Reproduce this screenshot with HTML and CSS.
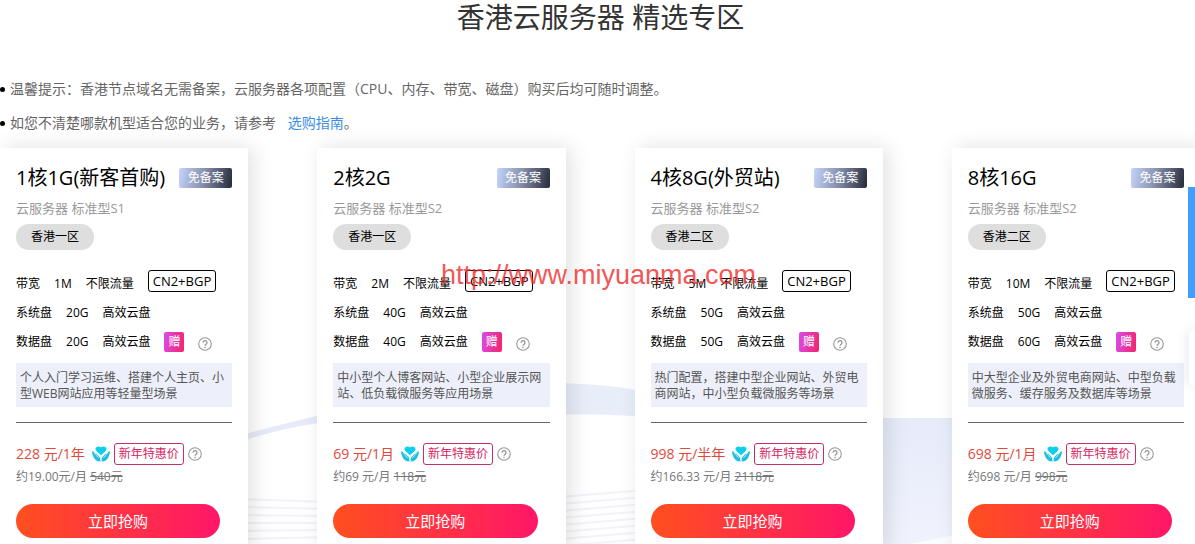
FILE: index.html
```html
<!DOCTYPE html>
<html lang="zh-CN">
<head>
<meta charset="utf-8">
<title>香港云服务器 精选专区</title>
<link rel="stylesheet" href="styles.css">
</head>
<body>
<svg width="0" height="0" class="defs" aria-hidden="true">
  <symbol id="help" viewBox="0 0 14 14">
    <circle cx="7" cy="7" r="6.3" fill="none" stroke="#999" stroke-width="1.1"/>
    <path d="M5 5.700a2 2 0 1 1 3.100 1.600C7.300 7.800 7 8 7 8.700" fill="none" stroke="#888" stroke-width="1.1"/>
    <circle cx="7" cy="10.4" r=".75" fill="#888"/>
  </symbol>
  <symbol id="care" viewBox="0 0 18 16">
    <path d="M9 9.300 4.400 4.900A2.500 2.500 0 0 1 4.800 1.100C6.200 0 8 .3 9 1.500c1-1.200 2.800-1.500 4.200-.4a2.500 2.500 0 0 1 .4 3.800z" fill="#08cfec"/>
    <path d="M0 5.500c1.300-.3 2.100.4 2.500 1.600l.5 1.300.8-.9 3.300 2.900c1 1 1.300 2.200 1.300 5.100C5 15.500 3.200 14 1.900 11.800.8 9.900.2 7.900 0 5.500z" fill="#1bbfe0"/>
    <path d="M18 5.500c-1.300-.3-2.100.4-2.500 1.600L15 8.400l-.8-.9-3.300 2.900c-1 1-1.300 2.200-1.300 5.100 3.400 0 5.200-1.500 6.500-3.700 1.100-1.900 1.700-3.900 1.900-6.300z" fill="#1bbfe0"/>
    <path d="m3.500 8.800 3.200 3M14.500 8.800l-3.200 3" stroke="#fff" stroke-width=".7"/>
  </symbol>
</svg>

<main class="zone">
  <svg class="backdrop" viewBox="0 0 1195 544" preserveAspectRatio="none" aria-hidden="true">
    <defs>
      <linearGradient id="fade" x1="0" y1="0" x2="0" y2="1">
        <stop offset="0" stop-color="#e6ebfa"/><stop offset="1" stop-color="#f0f3fd"/>
      </linearGradient>
    </defs>
    <path d="M240 436C270 426 300 421 330 412V422C300 424 270 433 240 441z" fill="#e6ebfa"/>
    <path d="M560 383C590 384 620 386 645 392V417C620 415 590 414 560 415z" fill="#e8edfa"/>
    <path d="M870 418H1195V544H870z" fill="url(#fade)"/>
    <path d="M870 552 1000 526V552z" fill="#fbfcff"/>
    <path d="M1180 380 1195 386V440H1180z" fill="#eef2fc"/>
    <g fill="none" stroke="#f1f3f9" stroke-width="2">
      <path d="M240 499 330 502M240 507 330 509M240 515 330 516M240 523 330 523M240 531 330 530M240 539 330 537"/>
      <path d="M560 497 645 490M560 504 645 497M560 511 645 504M560 518 645 511M560 525 645 518M560 532 645 525M560 539 645 532M560 546 645 539"/>
    </g>
  </svg>

  <h1 class="zone-title">香港云服务器 精选专区</h1>
  <ul class="tips">
    <li>温馨提示：香港节点域名无需备案，云服务器各项配置（CPU、内存、带宽、磁盘）购买后均可随时调整。</li>
    <li>如您不清楚哪款机型适合您的业务，请参考 <a href="#guide">选购指南</a>。</li>
  </ul>

  <div class="cards">
    <article class="card">
      <header class="card-head"><h2>1核1G(新客首购)</h2><span class="free">免备案</span></header>
      <p class="model">云服务器 标准型S1</p>
      <span class="region">香港一区</span>
      <div class="specs">
        <div class="spec"><span>带宽</span><span>1M</span><span>不限流量</span><span class="line">CN2+BGP</span></div>
        <div class="spec"><span>系统盘</span><span>20G</span><span>高效云盘</span></div>
        <div class="spec"><span>数据盘</span><span>20G</span><span>高效云盘</span><span class="gift">赠</span><svg class="help"><use href="#help"/></svg></div>
      </div>
      <p class="scene">个人入门学习运维、搭建个人主页、小型WEB网站应用等轻量型场景</p>
      <div class="price"><strong>228 元/1年</strong><svg class="care"><use href="#care"/></svg><span class="deal">新年特惠价</span><svg class="help"><use href="#help"/></svg></div>
      <p class="average">约19.00元/月 <del>540元</del></p>
      <button class="buy" type="button">立即抢购</button>
    </article>

    <article class="card">
      <header class="card-head"><h2>2核2G</h2><span class="free">免备案</span></header>
      <p class="model">云服务器 标准型S2</p>
      <span class="region">香港一区</span>
      <div class="specs">
        <div class="spec"><span>带宽</span><span>2M</span><span>不限流量</span><span class="line">CN2+BGP</span></div>
        <div class="spec"><span>系统盘</span><span>40G</span><span>高效云盘</span></div>
        <div class="spec"><span>数据盘</span><span>40G</span><span>高效云盘</span><span class="gift">赠</span><svg class="help"><use href="#help"/></svg></div>
      </div>
      <p class="scene">中小型个人博客网站、小型企业展示网站、低负载微服务等应用场景</p>
      <div class="price"><strong>69 元/1月</strong><svg class="care"><use href="#care"/></svg><span class="deal">新年特惠价</span><svg class="help"><use href="#help"/></svg></div>
      <p class="average">约69 元/月 <del>118元</del></p>
      <button class="buy" type="button">立即抢购</button>
    </article>

    <article class="card">
      <header class="card-head"><h2>4核8G(外贸站)</h2><span class="free">免备案</span></header>
      <p class="model">云服务器 标准型S2</p>
      <span class="region">香港二区</span>
      <div class="specs">
        <div class="spec"><span>带宽</span><span>5M</span><span>不限流量</span><span class="line">CN2+BGP</span></div>
        <div class="spec"><span>系统盘</span><span>50G</span><span>高效云盘</span></div>
        <div class="spec"><span>数据盘</span><span>50G</span><span>高效云盘</span><span class="gift">赠</span><svg class="help"><use href="#help"/></svg></div>
      </div>
      <p class="scene">热门配置，搭建中型企业网站、外贸电商网站，中小型负载微服务等场景</p>
      <div class="price"><strong>998 元/半年</strong><svg class="care"><use href="#care"/></svg><span class="deal">新年特惠价</span><svg class="help"><use href="#help"/></svg></div>
      <p class="average">约166.33 元/月 <del>2118元</del></p>
      <button class="buy" type="button">立即抢购</button>
    </article>

    <article class="card">
      <header class="card-head"><h2>8核16G</h2><span class="free">免备案</span></header>
      <p class="model">云服务器 标准型S2</p>
      <span class="region">香港二区</span>
      <div class="specs">
        <div class="spec"><span>带宽</span><span>10M</span><span>不限流量</span><span class="line">CN2+BGP</span></div>
        <div class="spec"><span>系统盘</span><span>50G</span><span>高效云盘</span></div>
        <div class="spec"><span>数据盘</span><span>60G</span><span>高效云盘</span><span class="gift">赠</span><svg class="help"><use href="#help"/></svg></div>
      </div>
      <p class="scene">中大型企业及外贸电商网站、中型负载微服务、缓存服务及数据库等场景</p>
      <div class="price"><strong>698 元/1月</strong><svg class="care"><use href="#care"/></svg><span class="deal">新年特惠价</span><svg class="help"><use href="#help"/></svg></div>
      <p class="average">约698 元/月 <del>998元</del></p>
      <button class="buy" type="button">立即抢购</button>
    </article>
  </div>
  <div class="watermark">http://www.miyuanma.com</div>
</main>

<aside class="side">
  <div class="side-contact"></div>
  <div class="side-panel"></div>
</aside>
</body>
</html>
```

FILE: styles.css
```css
* {
  box-sizing: border-box;
}

body {
  margin: 0;
  background: #fff;
  color: #000;
  font: 12px/16px "Open Sans", "Noto Sans CJK SC", sans-serif;
  overflow: hidden;
}

h1, h2, p, ul {
  margin: 0;
  padding: 0;
  font-weight: 400;
}

.defs {
  position: absolute;
}

.zone {
  position: relative;
  overflow: hidden;
}

.backdrop {
  position: absolute;
  inset: 0;
  width: 100%;
  height: 544px;
  z-index: -1;
}

.zone-title {
  padding-left: 6px;
  color: #333;
  font-size: 28px;
  line-height: 34px;
  text-align: center;
}

.tips {
  padding: 38px 0 8px;
  list-style: none;
  color: #666;
  font-size: 14px;
  line-height: 34px;
}

.tips li {
  display: flex;
  align-items: center;
  white-space: pre;
}

.tips li::before {
  content: "";
  width: 5px;
  height: 5px;
  margin-right: 5px;
  border-radius: 50%;
  background: #000;
}

.tips a {
  margin-left: 8px;
  color: #3a8ee6;
  text-decoration: none;
}

.cards {
  display: grid;
  grid-template-columns: repeat(4, minmax(0, 1fr));
  column-gap: 69px;
  margin-right: -5px;
}

.card {
  padding: 16px;
  background: #fff;
  box-shadow: 5px 0 20px rgba(0, 0, 0, 0.12);
}

.card-head {
  display: flex;
  align-items: center;
  justify-content: space-between;
  height: 28px;
  white-space: nowrap;
}

.card-head h2 {
  font-size: 20px;
  line-height: 28px;
}

.free {
  width: 53px;
  border-radius: 2px;
  background: linear-gradient(100deg, #c4d4fa, #8993b0 45%, #262b3a);
  color: #fff;
  line-height: 20px;
  text-align: center;
}

.model {
  padding: 6px 0;
  color: #999;
  font-size: 13px;
  line-height: 20px;
}

.region {
  display: block;
  width: 78px;
  border-radius: 13px;
  background: #dedede;
  line-height: 26px;
  text-align: center;
}

.specs {
  padding: 19px 0 7px;
}

.spec {
  display: flex;
  align-items: center;
  gap: 14px;
  height: 29px;
  white-space: nowrap;
}

.line {
  padding: 0 4px;
  margin-bottom: 6px;
  border: 1px solid #000;
  border-radius: 3px;
  font-size: 13px;
  line-height: 20px;
}

.gift {
  width: 20px;
  border-radius: 2px;
  background: linear-gradient(100deg, #d94be8, #f3246b);
  color: #fff;
  line-height: 20px;
  text-align: center;
}

.help {
  flex: none;
  width: 14px;
  height: 14px;
}

.spec .help {
  margin-top: 4px;
}

.scene {
  padding: 7px 4px 5px;
  background: #edf0fa;
  color: #555;
}

.price {
  display: flex;
  align-items: center;
  gap: 4px;
  margin-top: 15px;
  padding-top: 20px;
  border-top: 1px solid #666;
  white-space: nowrap;
}

.price strong {
  margin-right: 3px;
  color: #e1483b;
  font-size: 14px;
  font-weight: 400;
}

.care {
  flex: none;
  width: 18px;
  height: 16px;
}

.deal {
  padding: 0 4px;
  border: 1px solid #c62f68;
  border-radius: 3px;
  color: #d6245f;
  line-height: 20px;
}

.average {
  padding: 4px 0 2px;
  color: #777;
}

.buy {
  display: block;
  width: calc(100% - 12px);
  height: 34px;
  margin-top: 17px;
  padding: 0;
  border: 0;
  border-radius: 17px;
  background: linear-gradient(90deg, #ff4f1f, #ff1668);
  color: #fff;
  font: inherit;
  font-size: 15px;
  cursor: pointer;
}

.watermark {
  position: absolute;
  top: 259px;
  left: 441px;
  color: rgba(240, 40, 40, 0.8);
  font: 27px/32px "Liberation Sans", Arial, sans-serif;
  pointer-events: none;
}

.side {
  position: fixed;
  top: 187px;
  right: 0;
  display: grid;
  justify-items: end;
  gap: 32px;
}

.side-contact {
  width: 7px;
  height: 111px;
  background: #409eff;
}

.side-panel {
  width: 6px;
  height: 55px;
  border-radius: 4px 0 0 4px;
  background: #fff;
  box-shadow: 0 0 12px rgba(60, 80, 140, 0.2);
}
```
